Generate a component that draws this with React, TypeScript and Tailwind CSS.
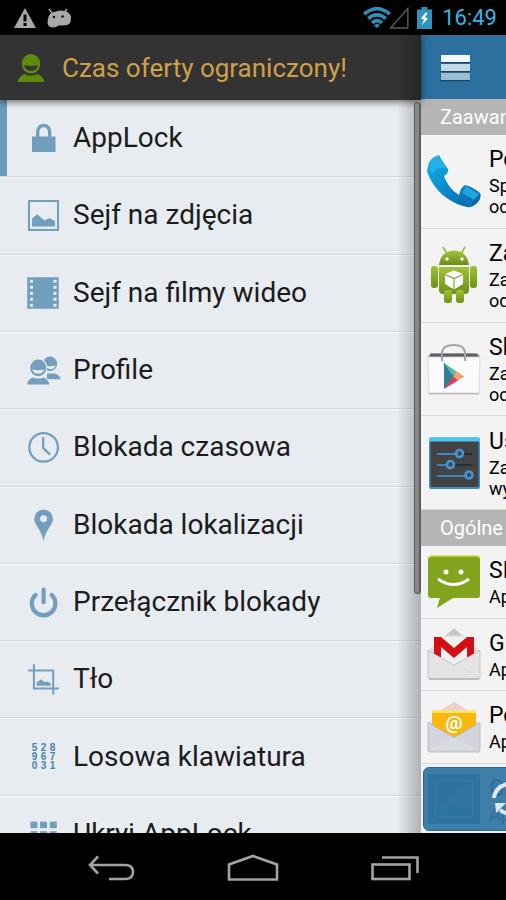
import React from 'react';

interface MenuItem {
    label: string;
    icon: React.ReactNode;
    active?: boolean;
}

interface AppItem {
    name: string;
    lines: string[];
    icon: React.ReactNode;
}

// DRAWER ICONS
const LockIcon = () => (
    <svg viewBox="0 0 32 32" className="w-8 h-8" fill="#729fbe">
        <rect x="5" y="14.5" width="23.5" height="15.5" />
        <path d="M10.7 15V9.5a6 6 0 0 1 12 0V15" fill="none" stroke="#729fbe" strokeWidth="3.4" />
    </svg>
);

const PhotoIcon = () => (
    <svg viewBox="0 0 32 32" className="w-8 h-8" fill="#729fbe">
        <rect x="2" y="2" width="29" height="29" fill="none" stroke="#729fbe" strokeWidth="2" />
        <path d="M5 27.5V19.5L10.3 15.3L17.5 21.5L22.3 19L28 22V27.5Z" />
    </svg>
);

const FilmIcon = () => (
    <svg viewBox="0 0 32 32" className="w-8 h-8">
        <rect width="32" height="32" fill="#729fbe" />
        <rect x=".5" y=".5" width="31" height="31" fill="none" stroke="#8fb3cc" />
        {[2.7, 8.7, 14.7, 20.7, 26.7].map((y) => (
            <g key={y} fill="#e8ebf0">
                <rect x="3" y={y} width="3" height="3" rx=".5" />
                <rect x="26.5" y={y} width="3" height="3" rx=".5" />
            </g>
        ))}
    </svg>
);

const PeopleIcon = () => (
    <svg viewBox="0 0 34 32" className="w-8.5 h-8 -mr-0.5" fill="#729fbe">
        <circle cx="23" cy="9.8" r="7.2" />
        <path d="M17 11.2Q23 13.5 29 11.2Q27 15.8 22 15Z" fill="#e8ebf0" />
        <path d="M20 19.5H28Q32.6 20.5 33.5 25.2H20Z" />
        <circle cx="11.2" cy="13.6" r="9.2" fill="#e8ebf0" />
        <path d="M-1 31.5Q0 24 6 22.4H16.5Q22.5 24 23.6 31.5Z" fill="#e8ebf0" />
        <ellipse cx="11.2" cy="13.9" rx="8" ry="8.3" />
        <path d="M5 15.3Q11.2 17 17.4 15.3Q15.5 19.8 11.2 19.8Q7 19.8 5 15.3Z" fill="#e8ebf0" />
        <path d="M0 30.6Q1 24.8 6 23.4Q11.2 25.8 16.4 23.4Q21.4 24.8 22.4 30.6Z" />
    </svg>
);

const ClockIcon = () => (
    <svg viewBox="0 0 32 32" className="w-8 h-8" fill="none" stroke="#729fbe" strokeWidth="2.3">
        <circle cx="16.6" cy="16.4" r="14.3" />
        <path d="M16.2 6V17L23 23.6" />
    </svg>
);

const PinIcon = () => (
    <svg viewBox="0 0 32 33" className="w-8 h-8" fill="#729fbe">
        <path fillRule="evenodd" d="M16.6.5A9.7 9.7 0 0 1 26.3 10.2C26.3 16 18.5 21.5 16.6 33C14.7 21.5 6.9 16 6.9 10.2A9.7 9.7 0 0 1 16.6.5ZM16.6 6.4a3.6 3.6 0 1 0 0 7.2a3.6 3.6 0 0 0 0-7.2Z" />
    </svg>
);

const PowerIcon = () => (
    <svg viewBox="0 0 32 32" className="w-8 h-8" fill="none" stroke="#729fbe" strokeWidth="4.2" strokeLinecap="round">
        <path d="M8.6 8.9A11.8 11.8 0 1 0 24.6 8.9" />
        <path d="M16.6 3.6V16.2" />
    </svg>
);

const CropIcon = () => (
    <svg viewBox="0 0 32 32" className="w-8 h-8" fill="none" stroke="#729fbe" strokeWidth="2">
        <path d="M6.9 1.3V25.4H32" />
        <path d="M1 7.6H26.2V31.5" />
        <path d="M9.7 22.8V19.5L14.3 16.2L17 18.8H21L23.7 20.6V22.8Z" fill="#729fbe" stroke="none" />
    </svg>
);

const DigitsIcon = () => (
    <span className="w-8 h-8 grid grid-cols-3 grid-rows-3 pl-[3px] pr-0.5 py-0.5 text-[10px] leading-[9px] font-bold text-center text-[#4384ad] font-['Liberation_Sans',sans-serif]" aria-hidden="true">
        {['5', '2', '8', '9', '6', '7', '0', '3', '1'].map((n) => (
            <span key={n}>{n}</span>
        ))}
    </span>
);

const GridIcon = () => (
    <svg viewBox="0 0 32 32" className="w-8 h-8" fill="#729fbe">
        {[3.4, 13, 22.8].map((x) => (
            <g key={x}>
                <rect x={x} y="3.6" width="7" height="6.6" />
                <rect x={x} y="13.2" width="7" height="6.6" />
                <rect x={x} y="22.8" width="7" height="6.6" />
            </g>
        ))}
    </svg>
);

// APP ICONS
const PhoneAppIcon = () => (
    <svg viewBox="0 0 54 54" className="w-[54px] h-[54px]">
        <defs>
            <linearGradient id="phone" x1="0" y1="0" x2=".8" y2="1">
                <stop offset="0" stopColor="#12b5ea" />
                <stop offset=".5" stopColor="#0b8fd0" />
                <stop offset="1" stopColor="#0767aa" />
            </linearGradient>
        </defs>
        <path d="M1 12Q2 4 12 1Q15 7 21 15Q22 19 17 22C20 30 25 37 32 41Q34 33 38 31Q46 33 53 39Q55 43 51 48Q46 54 40 53C21 49 5 34 0 17Z" fill="url(#phone)" />
        <path d="M2 12Q3 5 11 2L19 14Q11 12 5 20Z" fill="#1fb2e8" />
        <path d="M35 39L39 32L52 40L47 46Z" fill="#1ea4de" />
        <path d="M35 41L46 47L43 53Q38 52 33 43Z" fill="#0a75ba" />
    </svg>
);

const AndroidAppIcon = () => (
    <svg viewBox="0 0 54 58" className="w-[54px] h-[58px]">
        <defs>
            <linearGradient id="droid" x1="0" y1="0" x2="0" y2="1">
                <stop offset="0" stopColor="#a3c336" />
                <stop offset="1" stopColor="#6a9017" />
            </linearGradient>
        </defs>
        <path d="M20 8L16 1M34 8L38 1" stroke="#9aba33" strokeWidth="1.6" />
        <g fill="url(#droid)">
            <path d="M12 19Q14 5 27 4.5Q40 5 42 19Z" />
            <path d="M12 21H42V44Q42 48 38 48H16Q12 48 12 44Z" />
            <rect x="4" y="20" width="7" height="22" rx="3" />
            <rect x="43" y="20" width="7" height="22" rx="3" />
            <rect x="17" y="44" width="8" height="13" rx="3" />
            <rect x="29" y="44" width="8" height="13" rx="3" />
        </g>
        <circle cx="20" cy="13" r="1.7" fill="#fff" />
        <circle cx="35" cy="13" r="1.7" fill="#fff" />
        <path d="M27 24.5L36 28V38L27 43.5L18 38V28Z" fill="#fff" />
        <path d="M18 28.5L27 32.5L36 28.5M27 32.5V43" stroke="#7f9f3a" strokeWidth="1.2" fill="none" />
    </svg>
);

const StoreAppIcon = () => (
    <svg viewBox="0 0 54 54" className="w-[54px] h-[54px]">
        <path d="M1 14L4 11H50L53 14V17H1Z" fill="#9b9b9f" />
        <path d="M4 12H50L51 15H3Z" fill="#5d5d62" />
        <path d="M1 15H53L52 52H2Z" fill="#fbfafc" stroke="#d2d2d9" strokeWidth=".8" />
        <path d="M2 51.5H52" stroke="#bcbcc6" strokeWidth="1.5" />
        <path d="M15 19V10Q16 3 27 3Q37 3 38 10V19" fill="none" stroke="#a2a2a9" strokeWidth="2.2" />
        <path d="M17 21V47L30 34Z" fill="#27899f" />
        <path d="M17 21L37 34.5L30 35L17 28Z" fill="#5db7a3" />
        <path d="M29 29.5L37.5 34.5L30 39L26 34.5Z" fill="#f2a36a" />
        <path d="M17 47L26 34.5L31 38.5Z" fill="#d9415b" />
        <path d="M17 21V45L26 34.5Z" fill="#2f7f9d" />
    </svg>
);

const SettingsAppIcon = () => (
    <svg viewBox="0 0 54 54" className="w-[54px] h-[54px]">
        <rect x="2" y="1.5" width="51" height="51.5" rx="2" fill="#3f8fcb" />
        <path d="M2 4Q2 1.5 4.5 1.5H50.5Q53 1.5 53 4V6H2Z" fill="#47c5f5" />
        <rect x="3.5" y="5.5" width="48" height="45.5" fill="#434343" />
        <path d="M10 18H45M10 29H45M10 40H45" stroke="#222e37" strokeWidth="2" />
        <path d="M10 18H30M10 29H21M10 40H40" stroke="#3d86c0" strokeWidth="2.2" />
        <g fill="#3b4b57" stroke="#4593cf" strokeWidth="2.6">
            <circle cx="32.5" cy="17.5" r="3.5" />
            <circle cx="23.5" cy="28.5" r="3.5" />
            <circle cx="42" cy="39" r="3.5" />
        </g>
    </svg>
);

const MessageAppIcon = () => (
    <svg viewBox="0 0 54 54" className="w-[54px] h-[54px]">
        <path d="M4 1H50Q53 1 53 4V40Q53 43 50 43H26L10 53L13 43H4Q1 43 1 40V4Q1 1 4 1Z" fill="#83a41d" />
        <path d="M2 3Q2 1 5 1H49Q52 1 52 3" stroke="#c9df3c" strokeWidth="1.6" fill="none" />
        <circle cx="19" cy="17" r="2.5" fill="#fff" />
        <circle cx="34" cy="17" r="2.5" fill="#fff" />
        <path d="M11 24Q27 35 42 24" fill="none" stroke="#fff" strokeWidth="3" />
    </svg>
);

const GmailAppIcon = () => (
    <svg viewBox="0 0 54 54" className="w-[54px] h-[54px]">
        <path d="M1 24L27 1L53 24V50H1Z" fill="#dcdcdc" />
        <path d="M19 8L27 2L35 8Z" fill="#c7c7c7" />
        <path d="M7 10H47V38H7Z" fill="#f1f1f1" />
        <path d="M7 30V10H14L27 21L40 10H47V30H40V20L27 31L14 20V30Z" fill="#d40f13" />
        <path d="M1 23.5L27 38L53 23.5V50Q53 52 51 52H3Q1 52 1 50Z" fill="#e4e4e4" stroke="#bdbdbd" strokeWidth=".8" />
        <path d="M2 51L22 38M52 51L32 38" stroke="#d9d9d9" />
        <path d="M2 52H52" stroke="#a2a2a2" strokeWidth="1.2" />
    </svg>
);

const MailAppIcon = () => (
    <svg viewBox="0 0 54 54" className="w-[54px] h-[54px]">
        <path d="M1 24L27 2L53 24V50H1Z" fill="#dadae0" />
        <path d="M14 10L27 2L40 10Z" fill="#eecfc6" />
        <rect x="5" y="10" width="44" height="28" fill="#f9b70f" />
        <path d="M5 10H49V13H5Z" fill="#fde46c" />
        <path d="M1 22.5L27 37.5L53 22.5V50Q53 52 51 52H3Q1 52 1 50Z" fill="#d4d4dd" stroke="#b2b2be" strokeWidth=".8" />
        <path d="M3 50L27 38L51 50" fill="#dadae3" />
        <text x="27" y="29" textAnchor="middle" fontSize="19" fontWeight="bold" fill="#fff" fontFamily="Roboto, sans-serif">@</text>
    </svg>
);

const GalleryAppIcon = () => (
    <svg viewBox="0 0 54 54" className="w-[54px] h-[54px]">
        <rect x="1" y="2" width="52" height="50" fill="#1d4567" />
        <rect x="8.5" y="8.5" width="37" height="36" fill="#27496e" stroke="#8fb4cc" strokeWidth="1.5" />
        <path d="M10 43Q14 25 44 10V30Q24 28 18 43Z" fill="#3a6a70" />
    </svg>
);

const menu: MenuItem[] = [
    { label: 'AppLock', icon: <LockIcon />, active: true },
    { label: 'Sejf na zdjęcia', icon: <PhotoIcon /> },
    { label: 'Sejf na filmy wideo', icon: <FilmIcon /> },
    { label: 'Profile', icon: <PeopleIcon /> },
    { label: 'Blokada czasowa', icon: <ClockIcon /> },
    { label: 'Blokada lokalizacji', icon: <PinIcon /> },
    { label: 'Przełącznik blokady', icon: <PowerIcon /> },
    { label: 'Tło', icon: <CropIcon /> },
    { label: 'Losowa klawiatura', icon: <DigitsIcon /> },
    { label: 'Ukryj AppLock', icon: <GridIcon /> },
];

const advanced: AppItem[] = [
    { name: 'Połączenia', lines: ['Sprawdza', 'oczekujące'], icon: <PhoneAppIcon /> },
    { name: 'Zainstaluj', lines: ['Zapobiega', 'odinstalowaniu'], icon: <AndroidAppIcon /> },
    { name: 'Sklep Play', lines: ['Zapobiega', 'oczekującym'], icon: <StoreAppIcon /> },
    { name: 'Ustawienia', lines: ['Zapobiega', 'wyłączeniu'], icon: <SettingsAppIcon /> },
];

const general: AppItem[] = [
    { name: 'SMS', lines: ['Aplikacja'], icon: <MessageAppIcon /> },
    { name: 'Gmail', lines: ['Aplikacja'], icon: <GmailAppIcon /> },
    { name: 'Poczta', lines: ['Aplikacja'], icon: <MailAppIcon /> },
    { name: 'Galeria', lines: ['Aplikacja'], icon: <GalleryAppIcon /> },
];

const StatusBar = () => (
    <div className="h-[35px] shrink-0 flex items-center pl-3.5 pr-[9px] bg-black">
        <svg viewBox="0 0 22 20" className="w-[22px] h-5 mr-[11px]">
            <path d="M11 0L22 20H0Z" fill="#a9a9a9" />
            <path d="M11 6.5V13.5M11 15V18" stroke="#000" strokeWidth="3" />
        </svg>
        <svg viewBox="0 0 24 20" className="w-6 h-5" fill="#a9a9a9">
            <path d="M2 1L5 5M20 1L17.5 4" stroke="#a9a9a9" strokeWidth="1.5" />
            <path d="M1 11Q2 4 9 3.5Q13 2 17 3Q24 4 24 10.5Q24 17.5 17 17.5Q14 17.5 11.5 17.5Q10 19.5 6 19.5Q0 19 .5 14Z" />
            <circle cx="7" cy="9" r="1.2" fill="#000" />
            <circle cx="15.5" cy="8.5" r="1.2" fill="#000" />
        </svg>
        <div className="ml-auto flex items-center">
            <svg viewBox="0 0 28 21" className="w-7 h-[21px]" fill="none" stroke="#2d8fb8" strokeWidth="3.6">
                <path d="M1.2 7.2Q14-3.8 26.8 7.2" />
                <path d="M5.2 11.6Q14 4 22.8 11.6" />
                <path d="M9 15.8Q14 11.5 19 15.8" />
                <path d="M11 18.2Q14 15.8 17 18.2L14 21Z" fill="#2d8fb8" stroke="none" />
            </svg>
            <svg viewBox="0 0 20 22" className="w-5 h-[22px] -ml-0.5 mr-2" fill="none" stroke="#5a5a5a" strokeWidth="1.4">
                <path d="M18.8 1.5V21H1.5Z" />
            </svg>
            <svg viewBox="0 0 15 22" className="w-[15px] h-[22px] mr-2.5">
                <path d="M4.5 0H10.5V2.5H15V22H0V2.5H4.5Z" fill="#3093bb" />
                <path d="M8.5 5.5L4 11.5L7 12.5L5 18L11 11.5L8 10.5L10.5 6Z" fill="#fff" />
            </svg>
            <span className="text-[22px] leading-7 text-[#33b5e5]">16:49</span>
        </div>
    </div>
);

const Drawer = () => (
    <aside className="relative flex-1 min-w-0 flex flex-col bg-[#e8ebf0]">
        <header className="relative z-10 h-[65px] shrink-0 flex items-center pl-[17px] gap-[17px] bg-[#333333] shadow-[0_2px_7px_rgba(0,0,0,0.55)]">
            <svg viewBox="0 0 28 30" className="w-7 h-[30px]" fill="#5e8b0d">
                <ellipse cx="14" cy="10.8" rx="9.2" ry="9.8" />
                <path d="M7 12.3Q14 13.6 21 12.3Q19.5 17.8 14 17.8Q8.5 17.8 7 12.3Z" fill="#333333" />
                <path d="M.5 29Q2 23 7.5 21Q14 24.5 20.5 21Q26 23 27.5 29Z" />
            </svg>
            <h1 className="text-[26px] leading-8 text-[#d0a048] whitespace-nowrap">Czas oferty ograniczony!</h1>
        </header>
        <nav className="flex-1 min-h-0 overflow-hidden">
            <ul className="h-[773px] grid grid-rows-10">
                {menu.map((item) => (
                    <li key={item.label} className="min-h-0 border-b border-[#d6d8da] shadow-[0_1px_0_#f8f9fb]">
                        <a href="#" className={`h-full flex items-center gap-3.5 pl-5 border-l-7 ${item.active ? 'border-[#6a9bbb]' : 'border-transparent'}`}>
                            <span className="shrink-0">{item.icon}</span>
                            <span className="text-[28px] leading-8 text-[#1b1b1b] whitespace-nowrap">{item.label}</span>
                        </a>
                    </li>
                ))}
            </ul>
        </nav>
        {/* Edge shadow and scroll thumb lie over the list */}
        <div className="absolute inset-y-0 right-0 w-6 z-20 bg-gradient-to-r from-transparent to-black/25 pointer-events-none"></div>
        <div className="absolute top-[67px] right-0 w-[7px] h-[492px] z-20 rounded-full bg-[#878787] border border-[#5c5c5c] border-r-2"></div>
    </aside>
);

const SectionTitle = ({ children }: { children: React.ReactNode }) => (
    <h2 className="h-9 flex items-center pl-[19px] bg-[#b5b5b5] text-xl leading-6 text-white whitespace-nowrap">{children}</h2>
);

const AppRow = ({ app }: { app: AppItem }) => (
    <li className="min-h-0 flex items-center gap-2 pl-1.5 border-b border-[#d9d9d9]">
        <span className="shrink-0">{app.icon}</span>
        <div className="text-black whitespace-nowrap">
            <h3 className="text-[23px] leading-[30px]">{app.name}</h3>
            {app.lines.map((line) => (
                <p key={line} className="text-lg leading-[21px]">{line}</p>
            ))}
        </div>
    </li>
);

const Content = () => (
    <main className="relative w-[85px] shrink-0 overflow-hidden bg-[#f3f3f3]">
        <div className="h-16 flex items-center pl-5 bg-[#2b709f]">
            <button aria-label="Menu" className="w-[29px] shrink-0 flex flex-col gap-0.5">
                <span className="w-full h-[7px] bg-[#f5f7f9] shadow-[0_1px_1px_#12486b]"></span>
                <span className="w-full h-[7px] bg-[#c5d9e4] shadow-[0_1px_1px_#12486b]"></span>
                <span className="w-full h-[7px] bg-[#9cbdd0] shadow-[0_1px_1px_#12486b]"></span>
            </button>
        </div>
        <SectionTitle>Zaawansowane</SectionTitle>
        <ul className="h-[375px] grid grid-rows-4">
            {advanced.map((app) => <AppRow key={app.name} app={app} />)}
        </ul>
        <SectionTitle>Ogólne</SectionTitle>
        <ul className="h-[290px] grid grid-rows-4">
            {general.map((app) => <AppRow key={app.name} app={app} />)}
        </ul>
        <button aria-label="Odśwież" className="absolute bottom-0.5 left-0.5 -right-8 h-16 flex items-center justify-end pr-1.5 rounded-md bg-[#2f75a3]/93 border border-[#28699a]">
            <svg viewBox="0 0 40 40" className="w-10 h-10" fill="none" stroke="#dce8f0" strokeWidth="4">
                <path d="M3 19A17 15 0 0 1 33 10" />
                <path d="M37 21A17 15 0 0 1 9 31" />
                <path d="M4 24H15L5 34Z M36 16H25L35 6Z" fill="#dce8f0" stroke="none" />
            </svg>
        </button>
    </main>
);

const NavBar = () => (
    <footer className="h-[67px] shrink-0 flex justify-center bg-black">
        <div className="w-[84%] grid grid-cols-3 pt-0.5">
            <button aria-label="Wstecz" className="flex items-center justify-center">
                <svg viewBox="0 0 50 28" className="w-[50px] h-7" fill="none" stroke="#a3a3a3" strokeWidth="2.6">
                    <path d="M4 11H40Q47 11.5 47 18Q47 24.5 40 25H23" />
                    <path d="M12 2.5L4 11L12 19.5" />
                </svg>
            </button>
            <button aria-label="Ekran główny" className="flex items-center justify-center">
                <svg viewBox="0 0 52 28" className="w-[52px] h-7" fill="none" stroke="#a3a3a3" strokeWidth="2.6">
                    <path d="M2 25.5V10.5L26 2L50 10.5V25.5Z" />
                </svg>
            </button>
            <button aria-label="Ostatnie" className="flex items-center justify-center">
                <svg viewBox="0 0 50 28" className="w-[50px] h-7" fill="none" stroke="#a3a3a3" strokeWidth="2.6">
                    <rect x="2.5" y="10.5" width="37" height="14.5" />
                    <path d="M12 3.5H47.5V19" />
                </svg>
            </button>
        </div>
    </footer>
);

const App: React.FC = () => {
    return (
        <div className="h-screen flex flex-col overflow-hidden bg-black font-[Roboto,sans-serif]">
            <StatusBar />
            <div className="flex-1 min-h-0 flex overflow-hidden">
                <Drawer />
                <Content />
            </div>
            <NavBar />
        </div>
    );
};

export default App;
